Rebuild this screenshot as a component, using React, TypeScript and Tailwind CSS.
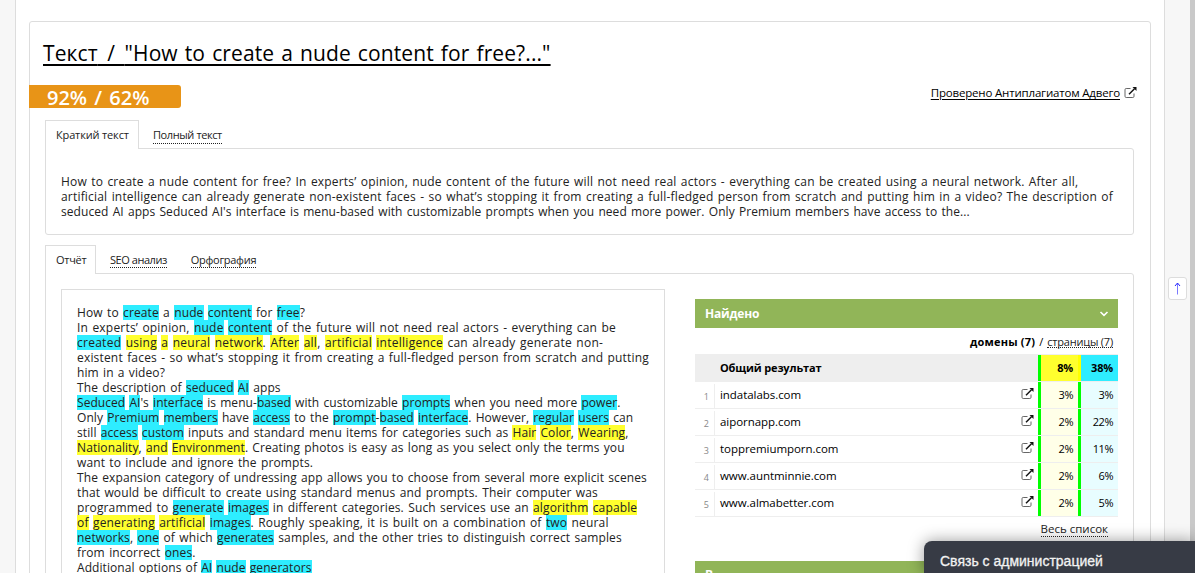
import { Fragment } from 'react';

type Site = { name: string; yellow: string; cyan: string };
type Line = { text: string; tracking: string };

const sites: Site[] = [
  { name: 'indatalabs.com', yellow: '3%', cyan: '3%' },
  { name: 'aipornapp.com', yellow: '2%', cyan: '22%' },
  { name: 'toppremiumporn.com', yellow: '2%', cyan: '11%' },
  { name: 'www.auntminnie.com', yellow: '2%', cyan: '6%' },
  { name: 'www.almabetter.com', yellow: '2%', cyan: '5%' },
];

const summary: Line[] = [
  { tracking: 'tracking-[0.19px]', text: 'How to create a nude content for free? In experts’ opinion, nude content of the future will not need real actors - everything can be created using a neural network. After all,' },
  { tracking: 'tracking-[0.19px]', text: 'artificial intelligence can already generate non-existent faces - so what’s stopping it from creating a full-fledged person from scratch and putting him in a video? The description of' },
  { tracking: 'tracking-[0.07px]', text: "seduced AI apps Seduced AI's interface is menu-based with customizable prompts when you need more power. Only Premium members have access to the..." },
];

// {word} is a cyan match, [word] is a yellow one
const lines: Line[] = [
  { tracking: 'tracking-[0.13px]', text: 'How to {create} a {nude} {content} for {free}?' },
  { tracking: 'tracking-[0.2px]', text: 'In experts’ opinion, {nude} {content} of the future will not need real actors - everything can be' },
  { tracking: 'tracking-[0.26px]', text: '{created} [using] [a] [neural] [network]. [After] [all], [artificial] [intelligence] can already generate non-' },
  { tracking: 'tracking-[0.18px]', text: 'existent faces - so what’s stopping it from creating a full-fledged person from scratch and putting' },
  { tracking: 'tracking-[0.1px]', text: 'him in a video?' },
  { tracking: 'tracking-[0.1px]', text: 'The description of {seduced} {AI} apps' },
  { tracking: 'tracking-[0.05px]', text: "{Seduced} {AI}'s {interface} is menu-{based} with customizable {prompts} when you need more {power}." },
  { tracking: 'tracking-[0.08px]', text: 'Only {Premium} {members} have {access} to the {prompt}-{based} {interface}. However, {regular} {users} can' },
  { tracking: 'tracking-[0.09px]', text: 'still {access} {custom} inputs and standard menu items for categories such as [Hair] [Color], [Wearing],' },
  { tracking: 'tracking-[0.09px]', text: '[Nationality], [and] [Environment]. Creating photos is easy as long as you select only the terms you' },
  { tracking: 'tracking-[0.13px]', text: 'want to include and ignore the prompts.' },
  { tracking: 'tracking-[0.1px]', text: 'The expansion category of undressing app allows you to choose from several more explicit scenes' },
  { tracking: 'tracking-[0.14px]', text: 'that would be difficult to create using standard menus and prompts. Their computer was' },
  { tracking: 'tracking-[0.14px]', text: 'programmed to {generate} {images} in different categories. Such services use an [algorithm] [capable]' },
  { tracking: 'tracking-[0.18px]', text: '[of] [generating] [artificial] {images}. Roughly speaking, it is built on a combination of {two} neural' },
  { tracking: 'tracking-[0.14px]', text: '{networks}, {one} of which {generates} samples, and the other tries to distinguish correct samples' },
  { tracking: 'tracking-[0.15px]', text: 'from incorrect {ones}.' },
  { tracking: 'tracking-[0.07px]', text: 'Additional options of {AI} {nude} {generators}' },
];

function Marked({ text }: { text: string }) {
  return (
    <>
      {text.split(/(\{[^}]+\}|\[[^\]]+\])/).map((part, i) => {
        if (part.startsWith('{')) {
          return <span key={i} className="inline-block h-[15px] bg-[#2eedff]">{part.slice(1, -1)}</span>;
        }
        if (part.startsWith('[')) {
          return <span key={i} className="inline-block h-[15px] bg-[#ffff2e]">{part.slice(1, -1)}</span>;
        }
        return <Fragment key={i}>{part}</Fragment>;
      })}
    </>
  );
}

function ExternalIcon({ className = '' }: { className?: string }) {
  return (
    <svg width="13" height="12" viewBox="0 0 13 12" fill="none" className={className}>
      <path d="M6.5 1.5H2.2Q1 1.5 1 2.7V9.3Q1 10.5 2.2 10.5H8.8Q10 10.5 10 9.3V6.5" stroke="#666" />
      <path d="M5 7.2L10.5 1.7" stroke="#111" strokeWidth="1.5" />
      <path d="M8.5 0H12.5V4Z" fill="#111" />
    </svg>
  );
}

export default function App() {
  return (
    <div className="relative flex h-[573px] w-[1195px] overflow-hidden bg-[#f7f7f7] font-['Open_Sans','Noto_Sans',sans-serif] text-[12px] leading-[15px] text-[#222]">
      <main className="ml-[15px] w-[1150px] shrink-0 border-x border-[#ddd] bg-white pt-[21px] pl-[13px]">
        <div className="h-[600px] w-[1122px] rounded-[3px] border border-[#ddd]">
          <h1 className="mt-[17px] ml-[13px] h-[27px] w-max text-[21px] leading-[28px] tracking-[0.1px] whitespace-nowrap text-black underline decoration-2 underline-offset-[3px] [word-spacing:1.5px]">
            Текст<span className="[word-spacing:4px]"> / </span>"How to create a nude content for free?..."
          </h1>
          <div className="mt-[19px] -ml-px flex h-[23px] items-start justify-between pr-[13px]">
            <div className="h-[23px] w-[152px] rounded-r-[3px] bg-[#e89417] pl-[18px] text-[20px] leading-[25px] font-semibold text-white [word-spacing:2px]">
              92% / 62%
            </div>
            <a className="flex items-start gap-[4px] whitespace-nowrap text-black">
              <span className="text-[11.5px] tracking-[-0.18px] underline underline-offset-2">Проверено Антиплагиатом Адвего</span>
              <ExternalIcon className="mt-[2px]" />
            </a>
          </div>

          <section className="mt-[12px] ml-[15px] w-[1089px]">
            <div className="relative flex h-[28px] text-[11px]">
              <div className="h-[29px] w-[94px] shrink-0 border border-b-0 border-[#ddd] bg-white pl-[10px] leading-[28px] tracking-[-0.15px]">Краткий текст</div>
              <div className="mt-[7px] ml-[14px] h-[17px] border-b border-dotted border-[#222] tracking-[-0.4px]">Полный текст</div>
            </div>
            <div className="h-[87px] rounded-[3px] rounded-tl-none border border-[#ddd] pt-[25px] pl-[15px] whitespace-nowrap [word-spacing:1px]">
              {summary.map((line) => (
                <div key={line.text} className={line.tracking}>{line.text}</div>
              ))}
            </div>
          </section>

          <section className="mt-[10px] ml-[15px] w-[1089px]">
            <div className="relative flex h-[28px] text-[11px]">
              <div className="h-[29px] w-[51px] shrink-0 border border-b-0 border-[#ddd] bg-white pl-[10px] leading-[28px] tracking-[-0.3px]">Отчёт</div>
              <div className="mt-[7px] ml-[14px] h-[16px] border-b border-dotted border-[#222] tracking-[-0.45px]">SEO анализ</div>
              <div className="mt-[7px] ml-[24px] h-[16px] border-b border-dotted border-[#222] tracking-[-0.3px]">Орфография</div>
            </div>
            <div className="flex h-[400px] rounded-tr-[3px] border border-[#ddd] pt-[15px] pl-[15px]">
              <article className="h-[380px] w-[604px] shrink-0 border border-[#ddd] pt-[15px] pl-[15px] whitespace-nowrap [word-spacing:1px]">
                {lines.map((line) => (
                  <div key={line.text} className={`h-[15px] ${line.tracking}`}><Marked text={line.text} /></div>
                ))}
              </article>

              <aside className="mt-[10px] ml-[30px] w-[423px] shrink-0 text-black">
                <div className="flex h-[29px] items-center justify-between bg-[#91b558] pr-[9px] pl-[10px] text-[12px] tracking-[-0.2px] font-bold text-white">
                  Найдено
                  <svg width="10" height="6" viewBox="0 0 10 6" fill="none" stroke="currentColor" strokeWidth="1.6">
                    <path d="M1.5 1L5 4.4L8.5 1" />
                  </svg>
                </div>
                <div className="flex h-[26px] justify-end gap-[4px] pt-[6px] pr-[5px] text-[11px]">
                  <b className="tracking-[0.2px]">домены (7)</b>
                  <span>/</span>
                  <span className="h-[14px] border-b border-dotted border-[#222] tracking-[-0.2px] text-[#222]">страницы (7)</span>
                </div>
                <div className="flex h-[28px] items-center bg-[#eee] text-[11px] leading-[14px] font-bold">
                  <div className="flex-1 pb-px pl-[25px] tracking-[-0.15px]">Общий результат</div>
                  <div className="h-[26px] w-[43px] border-x-[3px] border-l-[#0f0] border-r-[#ff0] bg-[#ffff2e] pr-[5px] text-right leading-[25px] tracking-[-0.2px]">8%</div>
                  <div className="h-[26px] w-[37px] bg-[#2eedff] pr-[5px] text-right leading-[25px] tracking-[-0.2px]">38%</div>
                </div>
                {sites.map((site, i) => (
                  <div key={site.name} className="flex h-[27px] border-b border-[#eee] leading-[26px]">
                    <div className="mt-[2px] w-[20px] border-r border-[#eee] pr-[5px] text-right text-[9px] text-[#888]">{i + 1}</div>
                    <div className="flex-1 pl-[5px] text-[11.5px] tracking-[-0.05px]">{site.name}</div>
                    <ExternalIcon className="mt-[6px] mr-[4px]" />
                    <div className="w-[43px] border-x-[3px] border-[#0f0] bg-[#ffffe8] pr-[5px] text-right text-[11px] tracking-[-0.5px]">{site.yellow}</div>
                    <div className="w-[37px] bg-[#e8fdff] pr-[5px] text-right text-[11px] tracking-[-0.5px]">{site.cyan}</div>
                  </div>
                ))}
                <div className="flex h-[44px] justify-end pt-[4px] pr-[10px] text-[11.5px]">
                  <span className="h-[16px] border-b border-dotted border-[#222] text-[#222]">Весь список</span>
                </div>
                <div className="h-[29px] bg-[#91b558] pl-[10px] text-[12px] leading-[28px] font-bold text-white">В</div>
              </aside>
            </div>
          </section>
        </div>
      </main>

      <button className="mt-[277px] ml-[3px] flex h-[23px] w-[19px] shrink-0 items-center justify-center rounded-[3px] border border-[#ddd] bg-white">
        <svg width="7" height="13" viewBox="0 0 7 13" fill="none" stroke="#22f">
          <path d="M3.5 1V12.5" strokeOpacity="0.6" />
          <path d="M1 4L3.5 1L6 4" />
        </svg>
      </button>
      <div className="ml-auto h-full w-[5px] bg-[#c9c9c9]" />

      <div className="absolute right-0 bottom-0 h-[32px] w-[271px] rounded-tl-[8px] bg-[#373b45] pl-[16px] font-['Liberation_Sans',sans-serif] text-[14px] leading-[40px] text-[#f2f2f2] shadow-[0_0_16px_rgba(0,0,0,0.4)] [-webkit-text-stroke:0.3px_#f2f2f2]">
        Связь с администрацией
      </div>
    </div>
  );
}
